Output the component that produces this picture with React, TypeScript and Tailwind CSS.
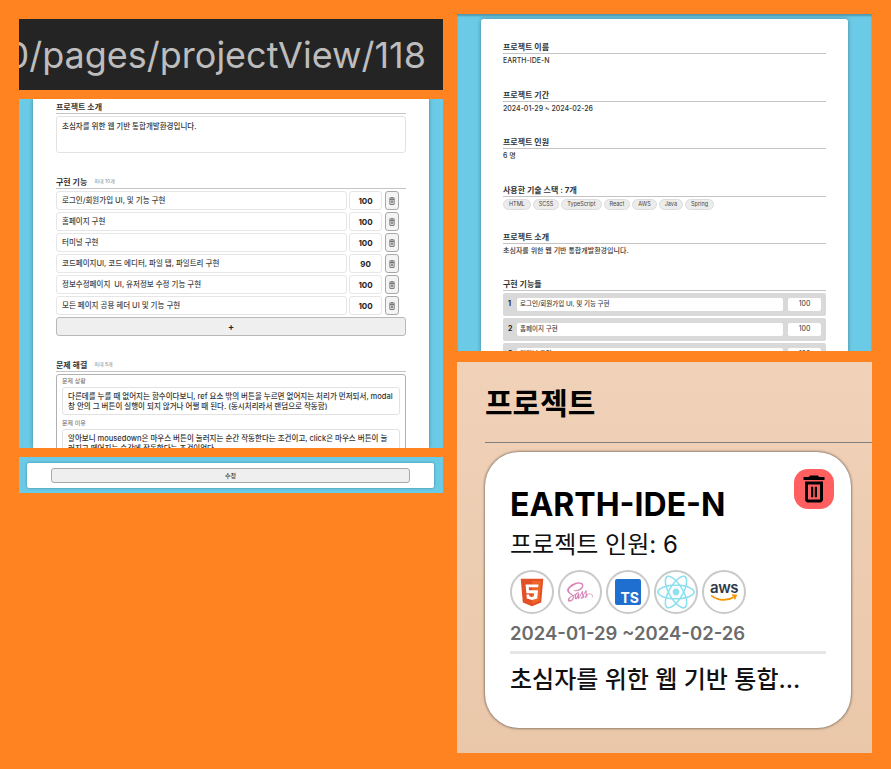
import type { ReactNode } from 'react';
import { FaReact, FaSass } from 'react-icons/fa';

const FONT = { fontFamily: 'Inter, "Noto Sans CJK KR", sans-serif' };

const EDIT_FEATURES = [
    { name: '로그인/회원가입 UI, 및 기능 구현', score: 100 },
    { name: '홈페이지 구현', score: 100 },
    { name: '터미널 구현', score: 100 },
    { name: '코드페이지UI, 코드 에디터, 파일 탭, 파일트리 구현', score: 90 },
    { name: '정보수정페이지  UI, 유저정보 수정 기능 구현', score: 100 },
    { name: '모든 페이지 공용 헤더 UI 및 기능 구현', score: 100 },
];

const VIEW_FEATURES = [
    { name: '로그인/회원가입 UI, 및 기능 구현', score: 100 },
    { name: '홈페이지 구현', score: 100 },
    { name: '터미널 구현', score: 100 },
];

const STACK = ['HTML', 'SCSS', 'TypeScript', 'React', 'AWS', 'Java', 'Spring'];

function TrashIcon({ className }: { className: string }) {
    return (
        <svg viewBox="0 0 24 24" fill="currentColor" className={className}>
            <path d="M6 19c0 1.1.9 2 2 2h8c1.1 0 2-.9 2-2V7H6v12zM8 9h8v10H8V9zm7.5-5l-1-1h-5l-1 1H5v2h14V4h-3.5z" />
            <rect x="10" y="10.5" width="1.5" height="7" />
            <rect x="12.5" y="10.5" width="1.5" height="7" />
        </svg>
    );
}

function Heading({ children, note }: { children: ReactNode; note?: string }) {
    return (
        <div className="flex h-[14px] items-center gap-[7px] border-b border-[#c4c4c4] text-[8px] leading-none font-bold text-[#333]">
            <span>{children}</span>
            {note && <span className="text-[5px] font-normal text-[#888]">{note}</span>}
        </div>
    );
}

function EditPanel() {
    return (
        <div className="h-[349px] overflow-hidden bg-[#6bcbe6] px-[14px]">
            <div className="h-full bg-white px-[23px] pt-[1px] shadow-[0_0_4px_rgba(0,0,0,0.35)]">
                <Heading>프로젝트 소개</Heading>
                <div className="mt-[2px] h-[37px] rounded-[3px] border border-[#e2e2e2] px-[5px] py-[5px] text-[7.5px] leading-[10px] font-medium text-[#333]">
                    초심자를 위한 웹 기반 통합개발환경입니다.
                </div>

                <div className="mt-[22px]">
                    <Heading note="최대 10개">구현 기능</Heading>
                </div>
                <div className="mt-[2px] flex flex-col gap-[2px]">
                    {EDIT_FEATURES.map((f) => (
                        <div key={f.name} className="flex h-[19px] gap-[2px]">
                            <div className="flex w-[291px] items-center rounded-[3px] border border-[#e6e6e6] px-[5px] text-[7.5px] font-medium whitespace-pre text-[#444]">
                                {f.name}
                            </div>
                            <div className="flex w-[33px] items-center justify-center rounded-[3px] border border-[#e6e6e6] text-[8px] font-bold text-[#222]">
                                {f.score}
                            </div>
                            <div className="ml-[1px] flex w-[14px] items-center justify-center rounded-[3px] border border-[#a8a8a8] bg-[#f4f4f4] text-[#555]">
                                <TrashIcon className="h-[10px] w-[10px]" />
                            </div>
                        </div>
                    ))}
                </div>
                <div className="mt-[2px] flex h-[19px] items-center justify-center rounded-[3px] border border-[#b8b8b8] bg-[#efefef] text-[9px] font-bold text-[#222]">
                    +
                </div>

                <div className="mt-[22px]">
                    <Heading note="최대 5개">문제 해결</Heading>
                </div>
                <div className="mt-[2px] rounded-[3px] border border-[#b0b0b0] px-[5px]">
                    <div className="h-[12px] text-[6px] leading-[11px] text-[#666]">문제 상황</div>
                    <div className="h-[28px] rounded-[3px] border border-[#e2e2e2] px-[5px] py-[4px] text-[7.5px] leading-[10px] font-medium text-[#333]">
                        다른데를 누를 때 없어지는 함수이다보니, ref 요소 밖의 버튼을 누르면 없어지는 처리가 먼저되서, modal 창 안의 그 버튼이 실행이 되지 않거나 어쩔 때 된다. (동시처리라서 랜덤으로 작동함)
                    </div>
                    <div className="mt-[2px] h-[12px] text-[6px] leading-[11px] text-[#666]">문제 이유</div>
                    <div className="h-[40px] rounded-[3px] border border-[#e2e2e2] px-[5px] py-[4px] text-[7.5px] leading-[10px] font-medium text-[#333]">
                        알아보니 mousedown은 마우스 버튼이 눌러지는 순간 작동한다는 조건이고, click은 마우스 버튼이 눌러지고 떼어지는 순간에 작동한다는 조건이었다.
                    </div>
                </div>
            </div>
        </div>
    );
}

function SubmitBar() {
    return (
        <div className="flex h-[36px] items-center bg-[#6bcbe6] px-[8px]">
            <div className="flex h-[25px] w-[407px] items-center justify-center rounded-[2px] bg-white shadow-[0_0_3px_rgba(0,0,0,0.35)]">
                <div className="flex h-[15px] w-[359px] items-center justify-center rounded-[3px] border border-[#a8a8a8] bg-[#efefef] text-[6px] font-medium text-[#333]">
                    수정
                </div>
            </div>
        </div>
    );
}

function ViewSection({ title, children, gapClass }: { title: string; children: ReactNode; gapClass: string }) {
    return (
        <div className={gapClass}>
            <Heading>{title}</Heading>
            {children}
        </div>
    );
}

function ViewPanel() {
    return (
        <div className="h-[337px] overflow-hidden bg-[#6bcbe6] px-[24px] pt-[5px] shadow-[inset_0_2px_2px_rgba(0,0,0,0.25)]">
            <div className="h-[340px] rounded-t-[3px] bg-white px-[22px] pt-[21px] shadow-[0_0_4px_rgba(0,0,0,0.35)]">
                <ViewSection title="프로젝트 이름" gapClass="">
                    <p className="mt-[2px] text-[7px] leading-[10px] font-medium text-[#333]">EARTH-IDE-N</p>
                </ViewSection>
                <ViewSection title="프로젝트 기간" gapClass="mt-[22px]">
                    <p className="mt-[2px] text-[7px] leading-[10px] font-medium text-[#333]">2024-01-29 ~ 2024-02-26</p>
                </ViewSection>
                <ViewSection title="프로젝트 인원" gapClass="mt-[21px]">
                    <p className="mt-[2px] text-[7px] leading-[10px] font-medium text-[#333]">6 명</p>
                </ViewSection>
                <ViewSection title="사용한 기술 스택 : 7개" gapClass="mt-[22px]">
                    <div className="mt-[2px] flex gap-[2px]">
                        {STACK.map((s) => (
                            <span key={s} className="flex h-[11px] items-center rounded-full border border-[#dcdcdc] bg-[#ececec] px-[5px] text-[5.5px] text-[#444]">
                                {s}
                            </span>
                        ))}
                    </div>
                </ViewSection>
                <ViewSection title="프로젝트 소개" gapClass="mt-[20px]">
                    <p className="mt-[2px] text-[7px] leading-[10px] font-medium text-[#333]">초심자를 위한 웹 기반 통합개발환경입니다.</p>
                </ViewSection>
                <ViewSection title="구현 기능들" gapClass="mt-[21px]">
                    <div className="mt-[2px] flex flex-col gap-[2px]">
                        {VIEW_FEATURES.map((f, i) => (
                            <div key={f.name} className="flex h-[23px] items-center rounded-[2px] bg-[#d9d9d9] pr-[5px] pl-[5px]">
                                <span className="w-[9px] text-[7px] font-bold text-[#222]">{i + 1}</span>
                                <div className="flex h-[13px] w-[266px] items-center rounded-[2px] bg-white px-[3px] text-[6.5px] font-medium text-[#444]">
                                    {f.name}
                                </div>
                                <div className="ml-[5px] flex h-[13px] w-[33px] items-center justify-center rounded-[2px] bg-white text-[7px] text-[#333]">
                                    {f.score}
                                </div>
                            </div>
                        ))}
                    </div>
                </ViewSection>
            </div>
        </div>
    );
}

function TechCircle({ children }: { children: ReactNode }) {
    return (
        <div className="flex h-[44px] w-[44px] shrink-0 items-center justify-center rounded-full border-2 border-[#c9c9c9] bg-white">
            {children}
        </div>
    );
}

function ProjectPanel() {
    return (
        <div className="h-[391px] overflow-hidden bg-gradient-to-b from-[#f0d2b9] to-[#eac7a9] pt-[20px] pl-[28px]">
            <h2 className="h-[61px] border-b border-[#7f7f7f] text-[30px] leading-[42px] font-bold text-black">프로젝트</h2>
            <div className="relative mt-[9px] h-[276px] w-[366px] rounded-[34px] bg-white px-[25px] pt-[34px] shadow-[0_0_3px_rgba(0,0,0,0.75)]">
                <div className="absolute top-[17px] right-[17px] flex h-[40px] w-[40px] items-center justify-center rounded-[14px] bg-[#ff5f5f] text-black">
                    <TrashIcon className="h-[36px] w-[36px]" />
                </div>
                <p className="text-[32px] leading-[38px] font-bold text-black">EARTH-IDE-N</p>
                <p className="mt-[3px] text-[24px] leading-[36px] text-[#111]">프로젝트 인원: 6</p>
                <div className="mt-[7px] flex gap-[4px]">
                    <TechCircle>
                        <svg viewBox="0 0 32 36" className="h-[29px] w-[26px]">
                            <path d="M2 1h28l-2.6 29.4L16 35 4.6 30.4z" fill="#e34f26" />
                            <path d="M16 3.4h11.4l-2.2 25.2L16 32.2z" fill="#f06529" />
                            <path d="M8 8h16l-.3 3.6H12l.3 3.6h11.1l-.9 10.2L16 27.4l-6.5-2-.4-5h3.5l.2 2.4 2.7.8 2.9-.8.3-3.9H9z" fill="#fff" />
                        </svg>
                    </TechCircle>
                    <TechCircle>
                        <FaSass className="h-[26px] w-[26px] text-[#d982b5]" />
                    </TechCircle>
                    <TechCircle>
                        <div className="flex h-[26px] w-[26px] items-end justify-end rounded-[2px] bg-[#1f6fd0] pr-[2px] text-[14px] leading-[15px] font-bold text-white">
                            TS
                        </div>
                    </TechCircle>
                    <TechCircle>
                        <FaReact className="h-[38px] w-[38px] text-[#8fe0ee]" />
                    </TechCircle>
                    <TechCircle>
                        <div className="flex flex-col items-center">
                            <span className="text-[15px] leading-[13px] font-semibold tracking-[-0.5px] text-[#2f3a4a]">aws</span>
                            <svg viewBox="0 0 32 10" className="h-[9px] w-[28px]">
                                <path d="M2 2c8 6 18 6 26 1" fill="none" stroke="#f79400" strokeWidth="2" strokeLinecap="round" />
                                <path d="M25 1l5 .5-2 4.5" fill="none" stroke="#f79400" strokeWidth="1.6" />
                            </svg>
                        </div>
                    </TechCircle>
                </div>
                <p className="mt-[7px] text-[18.5px] leading-[24px] font-semibold text-[#6b6b6b]">2024-01-29 ~2024-02-26</p>
                <div className="mt-[6px] h-[3px] bg-[#e6e6e6]" />
                <p className="mt-[8px] text-[24px] leading-[36px] font-medium text-[#111]">초심자를 위한 웹 기반 통합...</p>
            </div>
        </div>
    );
}

export default function App() {
    return (
        <div style={FONT} className="flex h-[769px] w-[891px] overflow-hidden bg-[#ff8321]">
            {/* 왼쪽: 수정 화면 캡처 */}
            <div className="ml-[19px] flex w-[424px] flex-col pt-[19px]">
                <div className="flex h-[71px] items-center justify-end overflow-hidden bg-[#242424] pr-[17px] text-[36px] whitespace-nowrap text-[#bdbdbd]">
                    0/pages/projectView/118
                </div>
                <div className="mt-[9px]">
                    <EditPanel />
                </div>
                <div className="mt-[9px]">
                    <SubmitBar />
                </div>
            </div>

            {/* 오른쪽: 상세 화면 + 프로젝트 카드 */}
            <div className="ml-[14px] flex w-[415px] flex-col pt-[14px]">
                <ViewPanel />
                <div className="mt-[11px]">
                    <ProjectPanel />
                </div>
            </div>
        </div>
    );
}
